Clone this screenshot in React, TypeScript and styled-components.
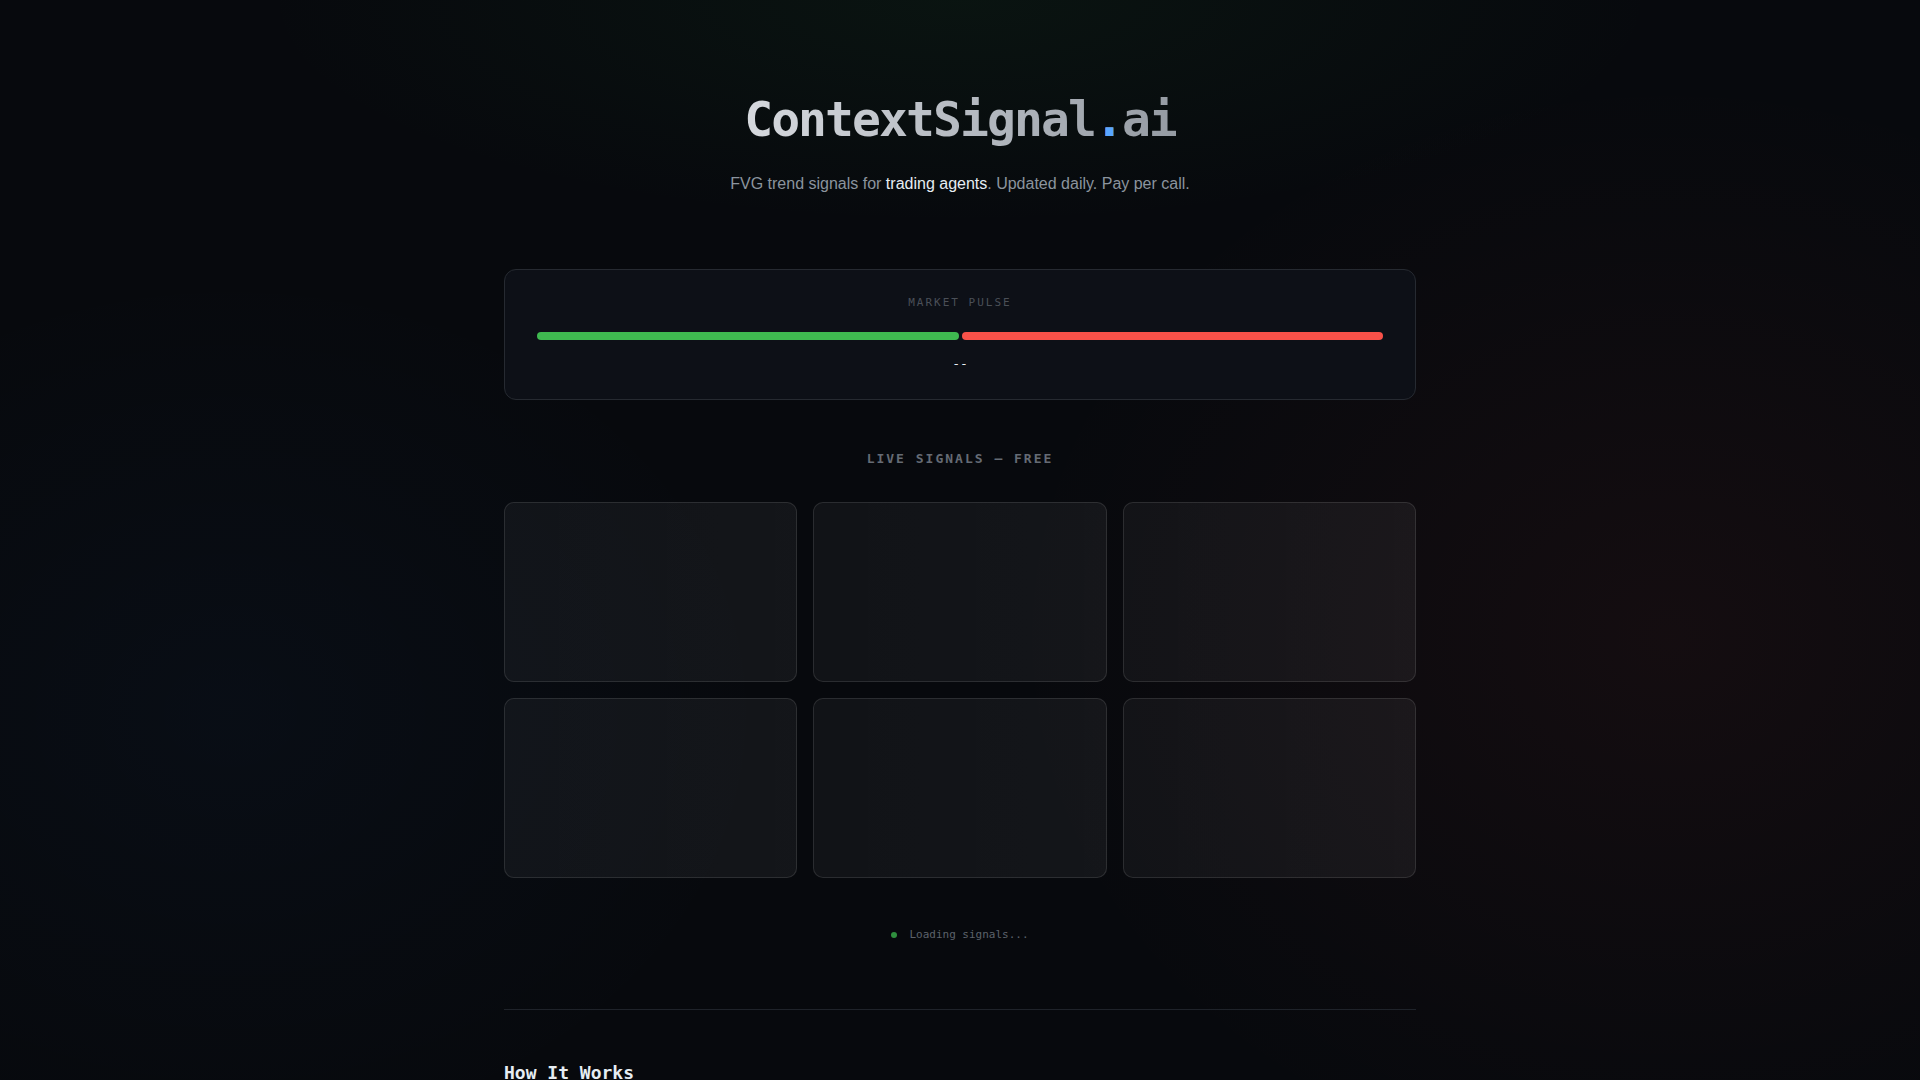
import { type ReactElement } from 'react';
import styled, { createGlobalStyle, keyframes } from 'styled-components';

const mono = `"DejaVu Sans Mono", "Liberation Mono", monospace`;
const sans = `"Liberation Sans", Arial, sans-serif`;

const GlobalStyle = createGlobalStyle`
  * {
    box-sizing: border-box;
  }

  html,
  body {
    margin: 0;
    padding: 0;
  }

  body {
    min-height: 100vh;
    color: #e6edf3;
    font-family: ${sans};
    background:
      radial-gradient(ellipse 1000px 320px at 50% 0%, rgba(46, 160, 67, 0.07), transparent 70%),
      radial-gradient(ellipse 920px 780px at 87% 59%, rgba(248, 81, 73, 0.055), transparent 72%),
      radial-gradient(ellipse 760px 620px at 12% 66%, rgba(56, 139, 253, 0.035), transparent 72%),
      #07090d;
    background-attachment: fixed;
  }
`;

const shimmer = keyframes`
  0% { background-position: -600px 0; }
  100% { background-position: 600px 0; }
`;

const pulse = keyframes`
  0%, 100% { opacity: 0.9; }
  50% { opacity: 0.35; }
`;

const Page = styled.main`
  max-width: 960px;
  margin: 0 auto;
  padding: 91px 24px 80px;
`;

const Header = styled.header`
  display: flex;
  flex-direction: column;
  align-items: center;
  margin-bottom: 73px;
`;

const Title = styled.h1`
  margin: 0 0 22px;
  font-family: ${mono};
  font-size: 48px;
  line-height: 1.2;
  font-weight: 700;
  letter-spacing: -0.04em;
  background: linear-gradient(90deg, #d6d9de 0%, #b3b8bf 55%, #959ba3 100%);
  -webkit-background-clip: text;
  background-clip: text;
  color: transparent;
`;

const Dot = styled.span`
  color: #58a6ff;
  -webkit-text-fill-color: #58a6ff;
`;

const Tagline = styled.p`
  margin: 0;
  font-size: 16px;
  line-height: 1.6;
  color: #8b949e;
`;

const Highlight = styled.span`
  color: #e6edf3;
`;

const PulseCard = styled.section`
  background: #0d1017;
  border: 1px solid #262a31;
  border-radius: 12px;
  padding: 25px 32px 25px;
  display: flex;
  flex-direction: column;
  align-items: center;
`;

const PulseLabel = styled.div`
  font-family: ${mono};
  font-size: 11px;
  line-height: 16px;
  letter-spacing: 2px;
  color: #4a4f57;
  text-transform: uppercase;
  margin-bottom: 21px;
`;

const Bar = styled.div`
  width: 100%;
  display: flex;
  gap: 3px;
`;

const BarSide = styled.div<{ $tone: 'bull' | 'bear' }>`
  flex: 1;
  height: 8px;
  border-radius: 4px;
  background: ${({ $tone }) => ($tone === 'bull' ? '#3fb950' : '#f85149')};
`;

const PulseValue = styled.div`
  margin-top: 14px;
  font-family: ${mono};
  font-size: 13px;
  line-height: 20px;
  color: #e6edf3;
`;

const SectionTitle = styled.h3`
  margin: 49px 0 33px;
  text-align: center;
  font-family: ${mono};
  font-size: 13px;
  line-height: 20px;
  font-weight: 700;
  letter-spacing: 2px;
  color: #656b74;
`;

const SignalGrid = styled.div`
  display: grid;
  grid-template-columns: repeat(3, 1fr);
  gap: 16px;
`;

const SkeletonCard = styled.div`
  height: 180px;
  border-radius: 10px;
  border: 1px solid rgba(255, 255, 255, 0.11);
  background:
    linear-gradient(
      90deg,
      rgba(255, 255, 255, 0) 0%,
      rgba(255, 255, 255, 0.018) 45%,
      rgba(255, 255, 255, 0) 90%
    ),
    rgba(255, 255, 255, 0.045);
  background-size: 1200px 100%, auto;
  animation: ${shimmer} 2.4s linear infinite;
`;

const Loading = styled.div`
  margin-top: 49px;
  display: flex;
  justify-content: center;
  align-items: center;
  gap: 12px;
  font-family: ${mono};
  font-size: 11px;
  line-height: 16px;
  color: #5c626b;
`;

const LoadingDot = styled.span`
  width: 6px;
  height: 6px;
  border-radius: 50%;
  background: #2f8f3e;
  animation: ${pulse} 1.6s ease-in-out infinite;
`;

const Divider = styled.hr`
  margin: 66px 0 0;
  border: 0;
  height: 1px;
  background: #1f232a;
`;

const HowSection = styled.section`
  padding-top: 51px;
`;

const HowTitle = styled.h2`
  margin: 0 0 24px;
  font-family: ${mono};
  font-size: 18px;
  line-height: 1.3;
  font-weight: 700;
  color: #e6edf3;
`;

const Steps = styled.ol`
  margin: 0;
  padding-left: 20px;
  font-size: 15px;
  line-height: 1.7;
  color: #8b949e;
`;

function App(): ReactElement {
  const skeletons = [0, 1, 2, 3, 4, 5];

  return (
    <>
      <GlobalStyle />
      <Page>
        <Header>
          <Title>
            ContextSignal<Dot>.</Dot>ai
          </Title>
          <Tagline>
            FVG trend signals for <Highlight>trading agents</Highlight>. Updated daily. Pay per call.
          </Tagline>
        </Header>

        <PulseCard>
          <PulseLabel>Market Pulse</PulseLabel>
          <Bar>
            <BarSide $tone='bull' />
            <BarSide $tone='bear' />
          </Bar>
          <PulseValue>--</PulseValue>
        </PulseCard>

        <SectionTitle>LIVE SIGNALS — FREE</SectionTitle>
        <SignalGrid>
          {skeletons.map((i) => (
            <SkeletonCard key={i} />
          ))}
        </SignalGrid>

        <Loading>
          <LoadingDot />
          Loading signals...
        </Loading>

        <Divider />

        <HowSection>
          <HowTitle>How It Works</HowTitle>
          <Steps>
            <li>Daily scan of fair value gaps across major markets.</li>
            <li>Trend direction and strength scored per symbol.</li>
            <li>Agents fetch signals over HTTP and pay per call.</li>
          </Steps>
        </HowSection>
      </Page>
    </>
  );
}

export default App;
